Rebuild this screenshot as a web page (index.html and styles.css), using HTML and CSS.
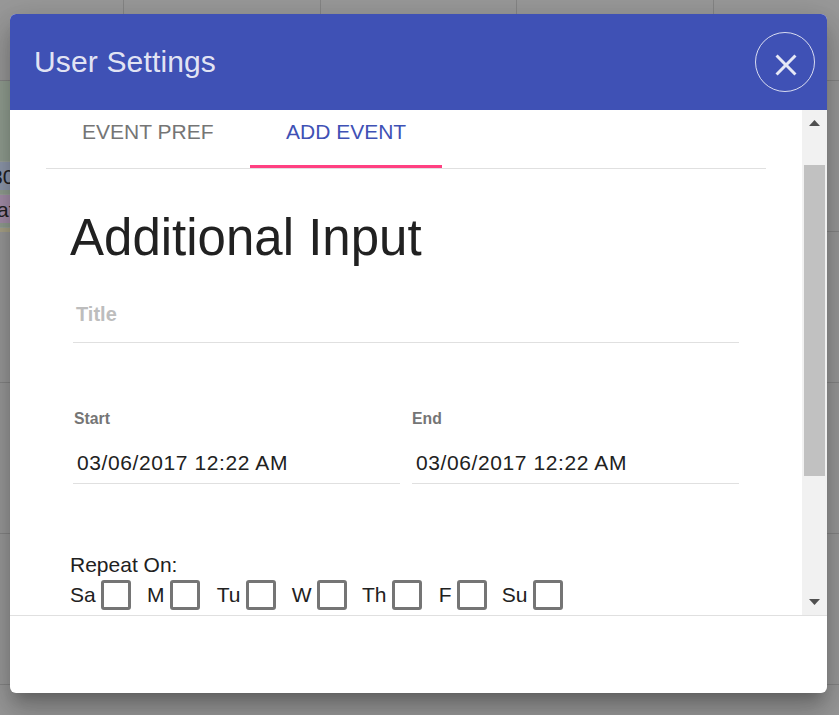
FILE: index.html
```html
<!DOCTYPE html>
<html lang="en">
<head>
<meta charset="utf-8">
<title>User Settings</title>
<link rel="stylesheet" href="styles.css">
</head>
<body>
<div class="calendar">
  <div class="today">
    <div class="event event-blue">30</div>
    <div class="event event-purple">at</div>
    <div class="event event-yellow"></div>
  </div>
</div>
<section class="dialog">
  <header class="toolbar">
    <h2>User Settings</h2>
    <button class="close" aria-label="Close">
      <svg viewBox="0 0 24 24"><path d="M19 6.41L17.59 5 12 10.59 6.41 5 5 6.41 10.59 12 5 17.59 6.41 19 12 13.41 17.59 19 19 17.59 13.41 12z"/></svg>
    </button>
  </header>
  <div class="body">
    <main class="content">
      <nav class="tabs">
        <span class="tab">EVENT PREF</span>
        <span class="tab active">ADD EVENT</span>
      </nav>
      <h1>Additional Input</h1>
      <div class="title-field">Title</div>
      <div class="dates">
        <div class="date"><label>Start</label><div class="value">03/06/2017 12:22 AM</div></div>
        <div class="date"><label>End</label><div class="value">03/06/2017 12:22 AM</div></div>
      </div>
      <div class="repeat">Repeat On:</div>
      <div class="days">
        <div class="day">Sa<i class="box"></i></div>
        <div class="day">M<i class="box"></i></div>
        <div class="day">Tu<i class="box"></i></div>
        <div class="day">W<i class="box"></i></div>
        <div class="day">Th<i class="box"></i></div>
        <div class="day">F<i class="box"></i></div>
        <div class="day">Su<i class="box"></i></div>
      </div>
    </main>
    <div class="scrollbar">
      <svg class="arrow" viewBox="0 0 11 6"><path d="M5.5 0L11 6H0z"/></svg>
      <div class="thumb"></div>
      <svg class="arrow down" viewBox="0 0 11 6"><path d="M0 0h11L5.5 6z"/></svg>
    </div>
  </div>
  <footer class="actions"></footer>
</section>
</body>
</html>
```

FILE: styles.css
```css
* { box-sizing: border-box; }
body {
  margin: 0;
  width: 839px;
  height: 715px;
  overflow: hidden;
  font-family: "Liberation Sans", Arial, sans-serif;
  font-size: 21px;
  color: #212121;
}
.calendar {
  position: absolute;
  inset: 0;
  background:
    repeating-linear-gradient(to right, transparent 0 195.8px, #858585 195.8px 196.8px) -73px 0 / 1000px 684px no-repeat,
    repeating-linear-gradient(to bottom, transparent 0 150px, #858585 150px 151px) 0 -70px / 100% 1000px,
    #999;
}
.today {
  position: absolute;
  top: 81px;
  left: 0;
  width: 123px;
  height: 150px;
  padding-top: 80px;
  background: #929f91;
}
.event {
  height: 29px;
  margin-bottom: 4px;
  border-top: 1px solid #9ba39b;
  line-height: 29px;
  text-indent: -9px;
  color: #222;
}
.event-blue { background: #8f99ad; }
.event-purple { background: #a68fab; text-indent: -3px; }
.event-yellow { height: 5px; background: #aaa488; }
.dialog {
  position: relative;
  display: flex;
  flex-direction: column;
  width: 817px;
  height: 679px;
  margin: 14px 0 0 10px;
  border-radius: 6px;
  background: #fff;
  overflow: hidden;
  box-shadow: 0 10.5px 12px -6px rgba(0,0,0,.2), 0 19.5px 28.5px 3px rgba(0,0,0,.14), 0 7.5px 36px 6px rgba(0,0,0,.12);
}
.toolbar {
  display: flex;
  justify-content: space-between;
  align-items: center;
  height: 96px;
  padding: 0 12px 0 24px;
  background: #3f51b5;
  color: rgba(255,255,255,.87);
}
h2 { margin: 0; font-size: 30px; font-weight: 400; letter-spacing: .15px; }
.close {
  display: flex;
  width: 60px;
  height: 60px;
  padding: 14px 0 0 12px;
  border: 1px solid rgba(255,255,255,.8);
  border-radius: 50%;
  background: none;
}
.close svg { width: 36px; height: 36px; fill: rgba(255,255,255,.87); }
.body { display: flex; height: 505px; }
.content { flex: 1; padding: 0 36px; }
.tabs { display: flex; height: 59px; border-bottom: 1px solid #e0e0e0; }
.tab { width: 204px; padding-left: 36px; line-height: 44px; color: #757575; }
.active { width: 192px; color: #3f51b5; border-bottom: 3px solid #ff4081; }
h1 { margin: 38px 0 0 24px; font-size: 51px; font-weight: 400; line-height: 62px; }
.title-field {
  height: 58px;
  margin: 16px 27px 0 27px;
  padding: 15px 3px;
  border-bottom: 1px solid #e0e0e0;
  font-size: 20px;
  font-weight: 700;
  line-height: 29px;
  color: #bdbdbd;
}
.dates { display: flex; gap: 12px; margin: 65px 27px 0 27px; }
.date { flex: 1; }
.date label { display: block; padding-left: 1px; font-size: 15.75px; font-weight: 700; line-height: 22px; color: #757575; }
.date + .date label { padding-left: 0; }
.value { height: 54px; padding: 21px 4px 0; border-bottom: 1px solid #e0e0e0; line-height: 24px; letter-spacing: .6px; }
.repeat { margin: 69px 0 0 24px; line-height: 24px; }
.days { display: grid; grid-template-columns: 61px 69px 76px 71px 75px 65px 76px; margin: 3px 0 0 24px; }
.day { display: flex; justify-content: flex-end; gap: 5.5px; line-height: 30px; }
.box { width: 30px; height: 30px; border: 3px solid #757575; border-radius: 3px; }
.scrollbar { display: flex; flex-direction: column; width: 25px; padding: 10px 2px; background: #f1f1f1; }
.arrow { width: 11px; height: 6px; margin-left: 5px; fill: #505050; }
.thumb { height: 311px; margin-top: 39px; background: #c1c1c1; }
.down { margin-top: auto; }
.actions { flex: 1; border-top: 1px solid #e0e0e0; }
```
